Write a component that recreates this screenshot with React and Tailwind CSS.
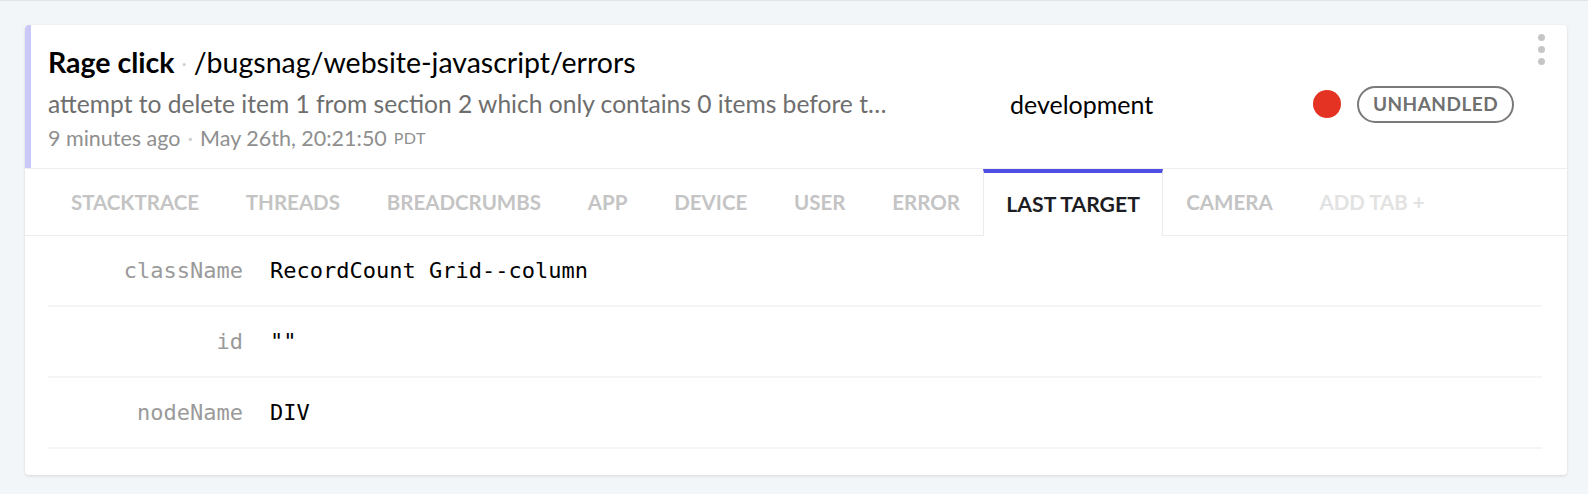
const tabs = [
  { label: "Stacktrace" },
  { label: "Threads" },
  { label: "Breadcrumbs" },
  { label: "App" },
  { label: "Device" },
  { label: "User" },
  { label: "Error" },
  { label: "Last target", active: true },
  { label: "Camera" },
  { label: "Add tab +", muted: true },
];

const rows = [
  { key: "className", value: "RecordCount Grid--column" },
  { key: "id", value: '""' },
  { key: "nodeName", value: "DIV" },
];

function Header() {
  return (
    <div className="relative flex h-[144px] border-b border-[#eeeeee]">
      {/* accent bar */}
      <div className="w-[6px] shrink-0 bg-[#c9c8f7] rounded-tl-[4px]"></div>

      <div className="w-[979px] shrink-0 pl-[17px] pt-[20px]">
        <div className="flex items-center text-[28.5px] leading-[34px] text-black whitespace-nowrap">
          <span className="font-bold">Rage click</span>
          <span className="mx-[7px] text-[#d0d0d0] text-[20px]">·</span>
          <span>/bugsnag/website-javascript/errors</span>
        </div>
        <div className="mt-[10px] w-[846px] truncate text-[24.6px] leading-[30px] text-[#6e6e6e]">
          attempt to delete item 1 from section 2 which only contains 0 items before the update
        </div>
        <div className="mt-[6px] flex items-center text-[21.5px] leading-[26px] text-[#8f8f8f] whitespace-nowrap">
          <span>9 minutes ago</span>
          <span className="mx-[7px] text-[#cfcfcf]">·</span>
          <span>May 26th, 20:21:50</span>
          <span className="ml-[7px] text-[16px] uppercase tracking-wide">pdt</span>
        </div>
      </div>

      <div className="w-[303px] shrink-0 pt-[64px] text-[25px] leading-[30px] text-black">
        development
      </div>

      <div className="flex items-start pt-[61px]">
        <div className="mt-[4px] h-[28px] w-[28px] rounded-full bg-[#e53323]"></div>
        <div className="ml-[16px] flex h-[37px] w-[157px] items-center justify-center rounded-full border-2 border-[#7a7a7a] text-[19px] font-bold uppercase tracking-wide text-[#707070]">
          Unhandled
        </div>
      </div>

      {/* kebab */}
      <div className="absolute right-[22px] top-[9px] flex flex-col gap-[5px]">
        <span className="h-[7px] w-[7px] rounded-full bg-[#c6c6c6]"></span>
        <span className="h-[7px] w-[7px] rounded-full bg-[#c6c6c6]"></span>
        <span className="h-[7px] w-[7px] rounded-full bg-[#c6c6c6]"></span>
      </div>
    </div>
  );
}

function Tabs() {
  return (
    <div className="flex h-[67px] border-b border-[#ececec] pl-[22.5px]">
      {tabs.map((tab) => (
        <div
          key={tab.label}
          className={
            tab.active
              ? "-mb-px flex items-center border-x border-t-4 border-x-[#ececec] border-t-[#4f4fe3] bg-white px-[22px] text-[21.2px] font-bold uppercase text-[#1d1d24]"
              : tab.muted
              ? "flex items-center px-[23.4px] text-[20.5px] font-bold uppercase text-[#e2e2e2]"
              : "flex items-center px-[23.4px] text-[20.5px] font-bold uppercase text-[#c4c4c4]"
          }
        >
          {tab.label}
        </div>
      ))}
    </div>
  );
}

function Rows() {
  return (
    <div className="px-[23px] pr-[25px]">
      {rows.map((row) => (
        <div
          key={row.key}
          className="flex h-[71px] items-center border-b-2 border-[#f5f5f5] text-[22px]"
          style={{ fontFamily: '"DejaVu Sans Mono", monospace' }}
        >
          <div className="w-[195px] shrink-0 text-right text-[#9a9a9a]">{row.key}</div>
          <div className="ml-[27px] text-black">{row.value}</div>
        </div>
      ))}
    </div>
  );
}

export default function App() {
  return (
    <div
      className="h-[494px] w-[1588px] border-t border-[#e2e4e7] bg-[#f3f6f9] pl-[25px] pr-[21px] pt-[24px]"
      style={{ fontFamily: 'Lato, "Open Sans", sans-serif' }}
    >
      <div className="h-[450px] overflow-hidden rounded-[4px] bg-white shadow-[0_1px_3px_rgba(0,0,0,0.12)]">
        <Header />
        <Tabs />
        <Rows />
      </div>
    </div>
  );
}
